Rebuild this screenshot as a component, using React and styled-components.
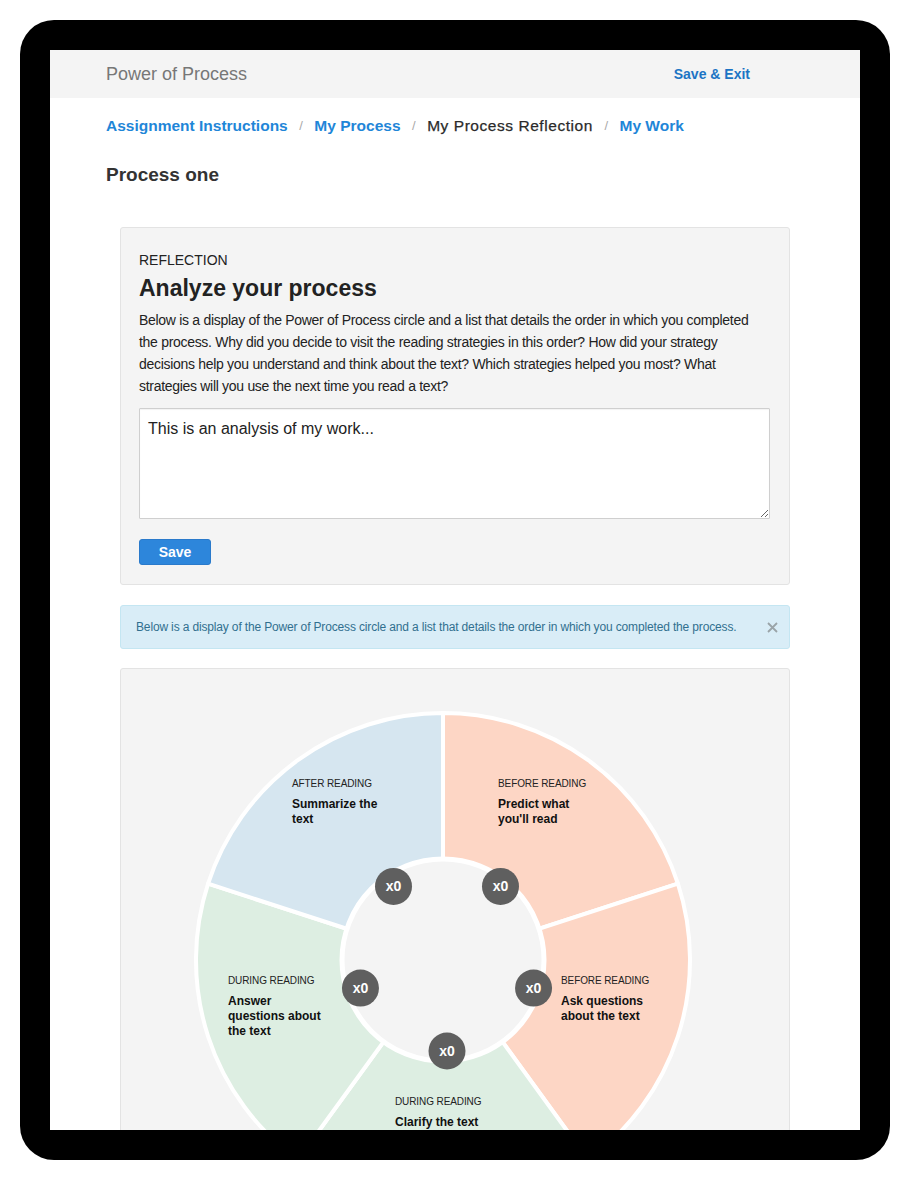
import React from "react";
import styled, { createGlobalStyle } from "styled-components";

const GlobalStyle = createGlobalStyle`
  html, body {
    margin: 0;
    padding: 0;
    background: #fff;
  }
`;

const Frame = styled.div`
  margin: 20px;
  width: 870px;
  height: 1140px;
  box-sizing: border-box;
  padding: 30px;
  background: #000;
  border-radius: 34px;
`;

const Screen = styled.div`
  width: 810px;
  height: 1080px;
  overflow: hidden;
  background: #fff;
  font-family: "Liberation Sans", Arial, Helvetica, sans-serif;
  color: #222;
`;

const TopBar = styled.header`
  height: 48px;
  background: #f4f4f4;
  display: flex;
  align-items: center;
  justify-content: space-between;
  padding: 0 110px 0 56px;
`;

const Brand = styled.div`
  font-size: 18px;
  color: #777;
`;

const ExitLink = styled.a`
  font-size: 14px;
  font-weight: 700;
  color: #1c74c4;
  text-decoration: none;
`;

const Main = styled.main`
  padding: 0 56px;
`;

const Crumbs = styled.nav`
  margin-top: 18px;
  display: flex;
  align-items: center;
  font-size: 15.5px;
  line-height: 20px;
`;

const Crumb = styled.a`
  color: ${(p) => (p.$active ? "#2a2a2a" : "#1f86d8")};
  font-weight: ${(p) => (p.$active ? 400 : 700)};
  letter-spacing: ${(p) => (p.$active ? "0.55px" : "0")};
  -webkit-text-stroke: ${(p) => (p.$active ? "0.25px #2a2a2a" : "0")};
  text-decoration: none;
`;

const Sep = styled.span`
  color: #aaa;
  font-size: 13px;
  padding: 0 11.5px;
`;

const PageTitle = styled.h2`
  margin: 28px 0 0;
  font-size: 19px;
  line-height: 22px;
  font-weight: 700;
  color: #333;
`;

const Card = styled.section`
  margin: ${(p) => p.$top}px 14px 0;
  background: #f4f4f4;
  border: 1px solid #e3e3e3;
  border-radius: 3px;
  padding: ${(p) => p.$pad};
`;

const Eyebrow = styled.div`
  font-size: 14px;
  line-height: 18px;
  color: #222;
`;

const Heading = styled.h3`
  margin: 5px 0 0;
  font-size: 23px;
  line-height: 28px;
  font-weight: 700;
  color: #222;
`;

const Prompt = styled.p`
  margin: 7px 0 0;
  font-size: 14px;
  line-height: 22px;
  letter-spacing: -0.3px;
  color: #222;
`;

const Answer = styled.textarea`
  display: block;
  margin-top: 11px;
  width: 100%;
  height: 111px;
  box-sizing: border-box;
  padding: 10px 8px;
  border: 1px solid #cfcfcf;
  border-radius: 1px;
  background: #fff;
  font-family: inherit;
  font-size: 16px;
  line-height: 20px;
  color: #222;
  box-shadow: inset 0 1px 1px rgba(0, 0, 0, 0.05);
`;

const SaveButton = styled.button`
  margin-top: 20px;
  width: 72px;
  height: 26px;
  border: 1px solid #2a7acb;
  border-radius: 3px;
  background: #2d86db;
  color: #fff;
  font-family: inherit;
  font-size: 14px;
  font-weight: 700;
  cursor: pointer;
`;

const Alert = styled.div`
  margin: 20px 14px 0;
  height: 44px;
  box-sizing: border-box;
  display: flex;
  align-items: center;
  justify-content: space-between;
  padding: 0 11px 0 15px;
  background: #d9edf7;
  border: 1px solid #c4e6f2;
  border-radius: 3px;
  color: #31708f;
  font-size: 12px;
  letter-spacing: -0.15px;
`;

const CloseButton = styled.button`
  border: 0;
  background: none;
  padding: 0;
  display: flex;
  cursor: pointer;
`;

const Wheel = styled.div`
  position: relative;
  width: 500px;
  height: 500px;
`;

const Label = styled.div`
  position: absolute;
  left: ${(p) => p.$x}px;
  top: ${(p) => p.$y}px;
  white-space: nowrap;
`;

const Phase = styled.div`
  font-size: 10px;
  line-height: 13px;
  letter-spacing: -0.1px;
  color: #222;
  text-transform: uppercase;
`;

const Strategy = styled.div`
  margin-top: 7px;
  font-size: 12px;
  line-height: 15px;
  font-weight: 700;
  color: #111;
`;

const CX = 250;
const CY = 250;
const R = 247;
const RI = 101;

const colors = {
  before: "#fdd6c5",
  during: "#ddeee2",
  after: "#d6e6f0",
};

const segments = [
  { from: 0, to: 72, kind: "before", phase: "Before reading", lines: ["Predict what", "you'll read"], x: 305, y: 67 },
  { from: 72, to: 144, kind: "before", phase: "Before reading", lines: ["Ask questions", "about the text"], x: 368, y: 264 },
  { from: 144, to: 216, kind: "during", phase: "During reading", lines: ["Clarify the text"], x: 202, y: 385 },
  { from: 216, to: 288, kind: "during", phase: "During reading", lines: ["Answer", "questions about", "the text"], x: 35, y: 264 },
  { from: 288, to: 360, kind: "after", phase: "After reading", lines: ["Summarize the", "text"], x: 99, y: 67 },
];

function pt(deg, r) {
  const t = (deg * Math.PI) / 180;
  return [CX + r * Math.sin(t), CY - r * Math.cos(t)];
}

function wedge(from, to) {
  const [x0, y0] = pt(from, R);
  const [x1, y1] = pt(to, R);
  return `M ${CX} ${CY} L ${x0} ${y0} A ${R} ${R} 0 0 1 ${x1} ${y1} Z`;
}

function ProcessWheel() {
  return (
    <Wheel>
      <svg width="500" height="500" viewBox="0 0 500 500">
        {segments.map((s) => (
          <path
            key={s.from}
            d={wedge(s.from, s.to)}
            fill={colors[s.kind]}
            stroke="#fff"
            strokeWidth="4"
            strokeLinejoin="round"
          />
        ))}
        <circle cx={CX} cy={CY} r={RI} fill="#f4f4f4" stroke="#fff" strokeWidth="5" />
        {segments.map((s) => {
          const [bx, by] = pt((s.from + s.to) / 2, 91);
          return (
            <g key={s.from} transform={`translate(${bx + 4} ${by})`}>
              <circle r="18.5" fill="#5f5f5f" />
              <text
                textAnchor="middle"
                dominantBaseline="central"
                fill="#fff"
                fontSize="14"
                fontWeight="700"
                fontFamily="Liberation Sans, Arial, sans-serif"
              >
                x0
              </text>
            </g>
          );
        })}
      </svg>
      {segments.map((s) => (
        <Label key={s.from} $x={s.x} $y={s.y}>
          <Phase>{s.phase}</Phase>
          <Strategy>
            {s.lines.map((l, i) => (
              <div key={i}>{l}</div>
            ))}
          </Strategy>
        </Label>
      ))}
    </Wheel>
  );
}

export default function App() {
  return (
    <>
      <GlobalStyle />
      <Frame>
        <Screen>
          <TopBar>
            <Brand>Power of Process</Brand>
            <ExitLink href="#">Save &amp; Exit</ExitLink>
          </TopBar>
          <Main>
            <Crumbs>
              <Crumb href="#">Assignment Instructions</Crumb>
              <Sep>/</Sep>
              <Crumb href="#">My Process</Crumb>
              <Sep>/</Sep>
              <Crumb as="span" $active>
                My Process Reflection
              </Crumb>
              <Sep>/</Sep>
              <Crumb href="#">My Work</Crumb>
            </Crumbs>
            <PageTitle>Process one</PageTitle>

            <Card $top={41} $pad="23px 19px 19px 18px">
              <Eyebrow>REFLECTION</Eyebrow>
              <Heading>Analyze your process</Heading>
              <Prompt>
                Below is a display of the Power of Process circle and a list that details the order in which you
                completed the process. Why did you decide to visit the reading strategies in this order? How did
                your strategy decisions help you understand and think about the text? Which strategies helped you
                most? What strategies will you use the next time you read a text?
              </Prompt>
              <Answer defaultValue="This is an analysis of my work..." />
              <SaveButton>Save</SaveButton>
            </Card>

            <Alert>
              <span>
                Below is a display of the Power of Process circle and a list that details the order in which you
                completed the process.
              </span>
              <CloseButton aria-label="Close">
                <svg width="11" height="11" viewBox="0 0 11 11">
                  <path d="M1 1 L10 10 M10 1 L1 10" stroke="#9aa4a8" strokeWidth="1.8" />
                </svg>
              </CloseButton>
            </Alert>

            <Card $top={19} $pad="41px 0 60px 72px">
              <ProcessWheel />
            </Card>
          </Main>
        </Screen>
      </Frame>
    </>
  );
}
